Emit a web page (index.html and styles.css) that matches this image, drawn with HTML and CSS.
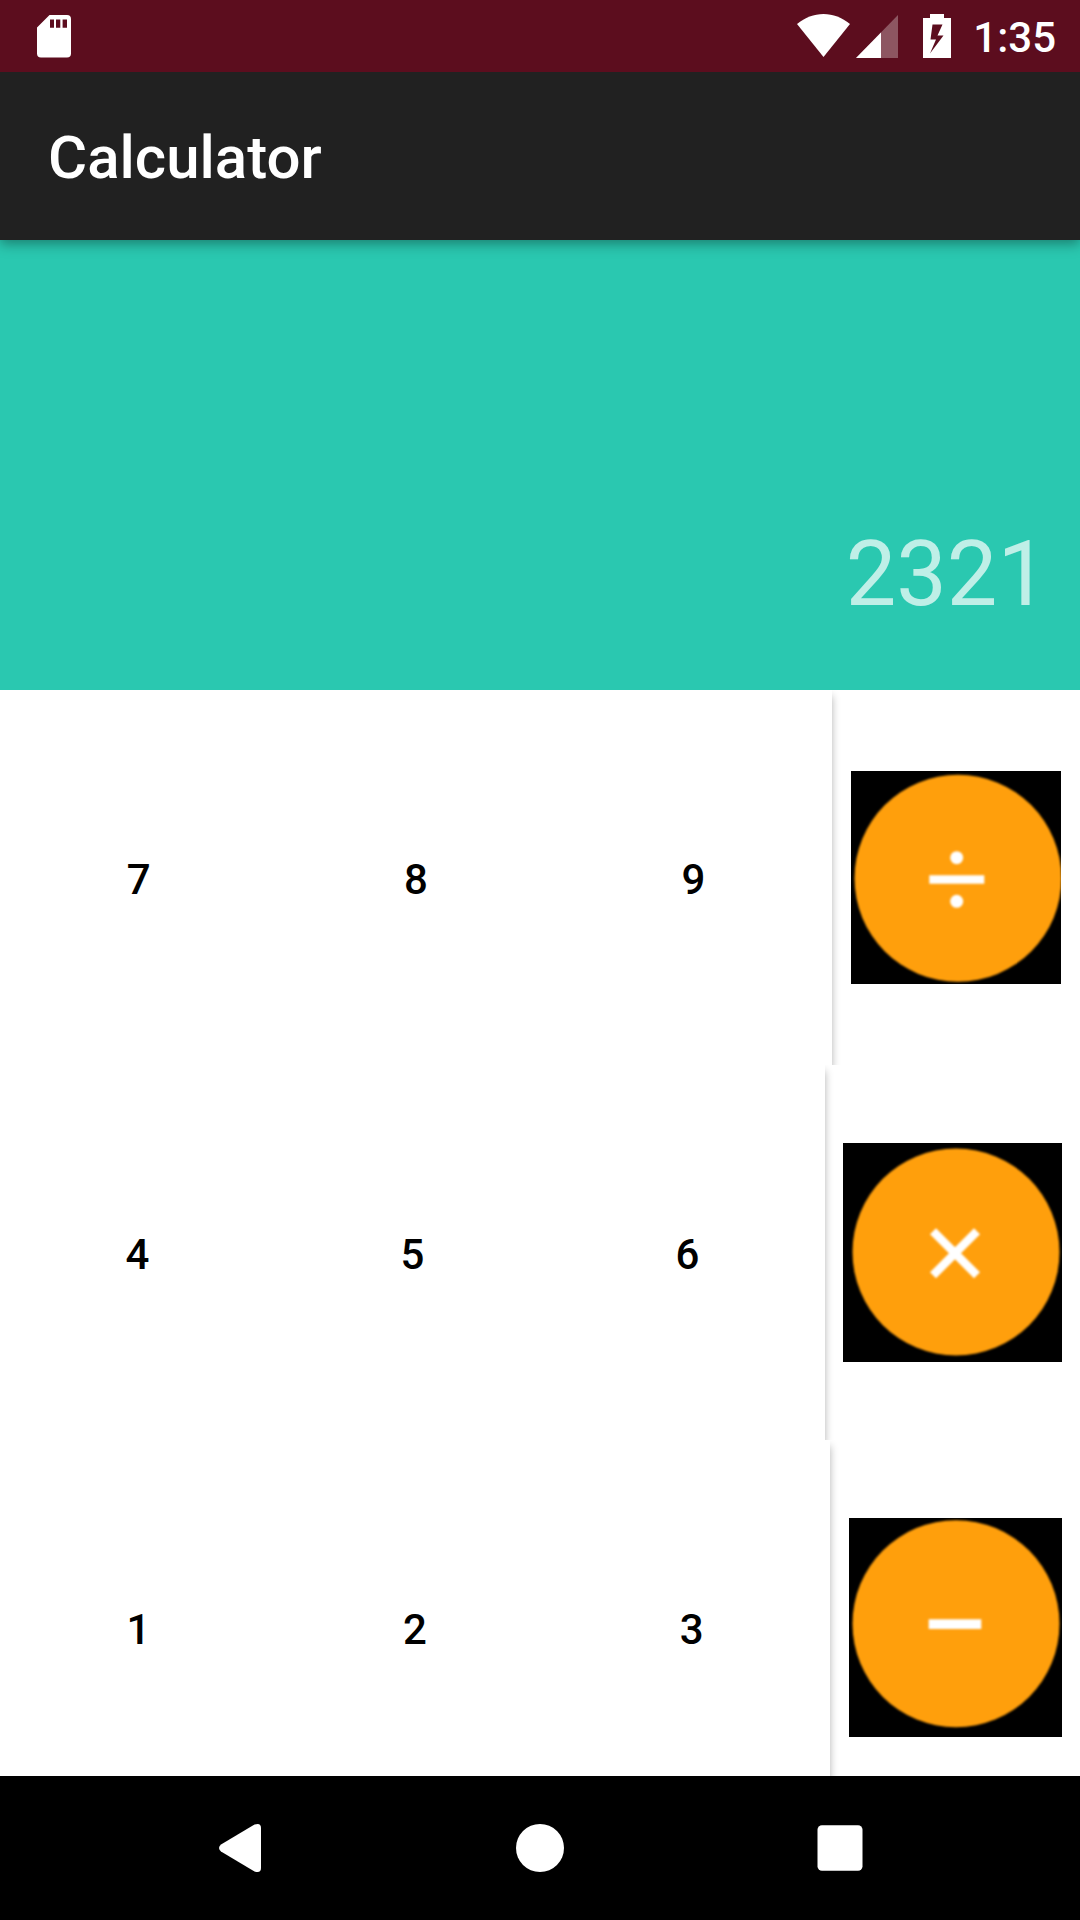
FILE: index.html
```html
<!DOCTYPE html>
<html lang="en">
<head>
<meta charset="utf-8">
<meta name="viewport" content="width=device-width, initial-scale=1">
<title>Calculator</title>
<link rel="stylesheet" href="styles.css">
</head>
<body>
<div class="status-bar">
  <svg class="icon-sd" width="34" height="43" viewBox="0 0 34 43" aria-hidden="true">
    <path fill="#fff" fill-rule="evenodd" d="M12.500 0H30a4 4 0 0 1 4 4V38.500a4 4 0 0 1-4 4H4a4 4 0 0 1-4-4V12.500ZM13 4.500V12.800H17V4.500ZM19 4.500V12.800H23.300V4.500ZM25.600 4.500V12.800H30V4.500Z"/>
  </svg>
  <div class="status-right">
    <svg width="54" height="44" viewBox="0 0 54 44" aria-hidden="true">
      <path fill="#fff" d="M0 10C8 3.500 17 0 26.500 0S45 3.500 53 10L26.500 43Z"/>
    </svg>
    <svg class="icon-signal" width="42" height="43" viewBox="0 0 42 43" aria-hidden="true">
      <path fill="#fff" fill-opacity=".3" d="M42 0V43H0Z"/>
      <path fill="#fff" d="M25 17.400V43H0Z"/>
    </svg>
    <svg class="icon-battery" width="28" height="44" viewBox="0 0 28 44" aria-hidden="true">
      <path fill="#fff" fill-rule="evenodd" d="M7 0H21V4H28V44H0V4H7ZM9.500 10.500L7.500 25.500H13L7 39.500L20.500 21.500H14.500L19.500 10.500Z"/>
    </svg>
    <span class="clock">1:35</span>
  </div>
</div>
<header class="app-bar">
  <h1 class="title">Calculator</h1>
</header>
<main class="calculator">
  <output class="display">2321</output>
  <div class="keypad">
    <div class="row row-divide">
      <div class="digits">
        <button class="digit">7</button>
        <button class="digit">8</button>
        <button class="digit">9</button>
      </div>
      <button class="operator" aria-label="Divide">
        <svg class="art" width="210" height="213" viewBox="0 0 210 213">
          <g class="soft">
            <circle class="disc" cx="107" cy="107.300" r="103.500"/>
            <path fill="#fff" d="M78.300 104.200H133.300V112.700H78.300Z"/>
            <circle fill="#fff" cx="105.700" cy="86.700" r="6.500"/>
            <circle fill="#fff" cx="105.700" cy="130.300" r="6.500"/>
          </g>
        </svg>
      </button>
    </div>
    <div class="row row-multiply">
      <div class="digits">
        <button class="digit">4</button>
        <button class="digit">5</button>
        <button class="digit">6</button>
      </div>
      <button class="operator" aria-label="Multiply">
        <svg class="art" width="219" height="219" viewBox="0 0 219 219">
          <g class="soft">
            <circle class="disc" cx="113" cy="109" r="103.500"/>
            <path fill="none" stroke="#fff" stroke-width="8.500" d="M90 88.300L134 132.300M134 88.300L90 132.300"/>
          </g>
        </svg>
      </button>
    </div>
    <div class="row row-subtract">
      <div class="digits">
        <button class="digit">1</button>
        <button class="digit">2</button>
        <button class="digit">3</button>
      </div>
      <button class="operator" aria-label="Subtract">
        <svg class="art" width="213" height="219" viewBox="0 0 213 219">
          <g class="soft">
            <circle class="disc" cx="107" cy="105.700" r="103.500"/>
            <path fill="#fff" d="M79.700 101.300H132.300V111H79.700Z"/>
          </g>
        </svg>
      </button>
    </div>
  </div>
</main>
<nav class="nav-bar">
  <button class="nav-button" aria-label="Back">
    <svg width="48" height="48" viewBox="0 0 48 48"><path fill="#fff" d="M5 20.500L38.500.600Q45 -1.500 45 4V44Q45 49.500 38.500 47.400L5 27.500Q1 24 5 20.500Z"/></svg>
  </button>
  <button class="nav-button" aria-label="Home">
    <svg width="48" height="48" viewBox="0 0 48 48"><circle fill="#fff" cx="24" cy="24" r="24"/></svg>
  </button>
  <button class="nav-button" aria-label="Recent apps">
    <svg width="48" height="48" viewBox="0 0 48 48"><rect fill="#fff" x="1.500" y="1.300" width="45" height="45.400" rx="4.500"/></svg>
  </button>
</nav>
</body>
</html>
```
FILE: styles.css
```css
* {
  box-sizing: border-box;
}

body {
  margin: 0;
  height: 100vh;
  display: flex;
  flex-direction: column;
  overflow: hidden;
  background: #fff;
  font-family: Roboto, "Noto Sans", sans-serif;
}

svg {
  display: block;
  flex: none;
}

button {
  margin: 0;
  padding: 0;
  border: 0;
  background: none;
  color: inherit;
  font: inherit;
  cursor: pointer;
}

.status-bar {
  flex: none;
  position: relative;
  z-index: 2;
  height: 72px;
  padding: 0 24px 0 37px;
  display: flex;
  align-items: center;
  justify-content: space-between;
  background: #5c0d1e;
  color: #fff;
}

.status-right {
  display: flex;
  align-items: center;
}

.icon-signal {
  margin-left: 5px;
}

.icon-battery {
  margin: 0 22px 0 25px;
}

.clock {
  padding-top: 4px;
  font-size: 42px;
  line-height: 48px;
  font-weight: 500;
}

.app-bar {
  flex: none;
  position: relative;
  z-index: 1;
  height: 168px;
  padding: 4px 48px 0;
  display: flex;
  align-items: center;
  background: #212121;
  color: #fff;
  box-shadow: 0 4px 12px rgba(0, 0, 0, 0.36);
}

.title {
  margin: 0;
  font-size: 60px;
  line-height: 72px;
  font-weight: 500;
}

.calculator {
  flex: 1;
  min-height: 0;
  display: flex;
  flex-direction: column;
}

.display {
  flex: none;
  height: 450px;
  padding: 0 32px 63px;
  display: flex;
  align-items: flex-end;
  justify-content: flex-end;
  background: #2ac8b0;
  color: rgba(255, 255, 255, 0.7);
  font-size: 90px;
  line-height: 104px;
}

.keypad {
  flex: 1;
  min-height: 0;
  overflow: hidden;
}

.row {
  height: 375px;
  display: grid;
  overflow: hidden;
}

.row-divide {
  grid-template-columns: 1fr 248px;
}

.row-multiply {
  grid-template-columns: 1fr 255px;
}

.row-subtract {
  grid-template-columns: 1fr 250px;
}

.digits {
  display: grid;
  grid-template-columns: repeat(3, 1fr);
  box-shadow: 0 6px 8px rgba(0, 0, 0, 0.3);
}

.digit {
  padding-top: 4px;
  color: #000;
  font-size: 42px;
  line-height: 48px;
  font-weight: 500;
}

.operator {
  display: flex;
  align-items: center;
  justify-content: center;
}

.art {
  background: #000;
}

.soft {
  filter: blur(1px);
}

.disc {
  fill: #ff9f0c;
}

.nav-bar {
  flex: none;
  height: 144px;
  padding: 0 90px;
  display: grid;
  grid-template-columns: repeat(3, 1fr);
  background: #000;
}

.nav-button {
  display: flex;
  align-items: center;
  justify-content: center;
}
```
